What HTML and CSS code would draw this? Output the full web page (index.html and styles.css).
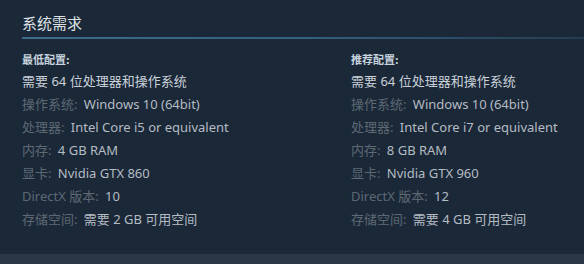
FILE: index.html
```html
<!DOCTYPE html>
<html lang="zh">
<head>
<meta charset="utf-8">
<link rel="stylesheet" href="styles.css">
</head>
<body>
<div class="panel">
  <h2 class="title">系统需求</h2>
  <div class="cols">
    <div class="col">
      <div class="head">最低配置:</div>
      <ul class="list">
        <li class="req">需要 64 位处理器和操作系统</li>
        <li><span class="k">操作系统:</span> Windows 10 (64bit)</li>
        <li><span class="k">处理器:</span> Intel Core i5 or equivalent</li>
        <li><span class="k">内存:</span> 4 GB RAM</li>
        <li><span class="k">显卡:</span> Nvidia GTX 860</li>
        <li><span class="k">DirectX 版本:</span> 10</li>
        <li><span class="k">存储空间:</span> 需要 2 GB 可用空间</li>
      </ul>
    </div>
    <div class="col">
      <div class="head">推荐配置:</div>
      <ul class="list">
        <li class="req">需要 64 位处理器和操作系统</li>
        <li><span class="k">操作系统:</span> Windows 10 (64bit)</li>
        <li><span class="k">处理器:</span> Intel Core i7 or equivalent</li>
        <li><span class="k">内存:</span> 8 GB RAM</li>
        <li><span class="k">显卡:</span> Nvidia GTX 960</li>
        <li><span class="k">DirectX 版本:</span> 12</li>
        <li><span class="k">存储空间:</span> 需要 4 GB 可用空间</li>
      </ul>
    </div>
  </div>
</div>
<div class="band"></div>
</body>
</html>
```
FILE: styles.css
```css
html, body {
  margin: 0;
  padding: 0;
  background: #1b2838;
  width: 584px;
  height: 264px;
  overflow: hidden;
  font-family: "Noto Sans", "Noto Sans CJK SC", sans-serif;
}
.panel {
  height: 254px;
  box-sizing: border-box;
  padding: 0 0 0 22px;
}
.title {
  margin: 0;
  padding-top: 14px;
  height: 39px;
  box-sizing: border-box;
  font-family: "Noto Sans CJK SC", sans-serif;
  font-size: 15px;
  font-weight: normal;
  line-height: 18px;
  color: #dfe3e6;
  border-bottom: 2px solid transparent;
  border-image: linear-gradient(to right, #3e6c8c 0%, #35607f 50%, #243c52 100%) 1;
}
.cols {
  display: grid;
  grid-template-columns: 329px 1fr;
  padding-top: 13px;
}
.head {
  font-family: "Noto Sans CJK SC", sans-serif;
  font-size: 11px;
  font-weight: bold;
  color: #c6d4df;
  line-height: 14px;
  height: 14px;
}
.list {
  list-style: none;
  margin: 4px 0 0;
  padding: 0;
}
.list li {
  font-size: 13px;
  line-height: 23px;
  color: #b4bcc3;
  white-space: nowrap;
}
.list li.req {
  color: #c9d1d8;
}
.k {
  color: #5d6873;
  margin-right: 3px;
}
.band {
  height: 10px;
  background: #2a3747;
}
```
